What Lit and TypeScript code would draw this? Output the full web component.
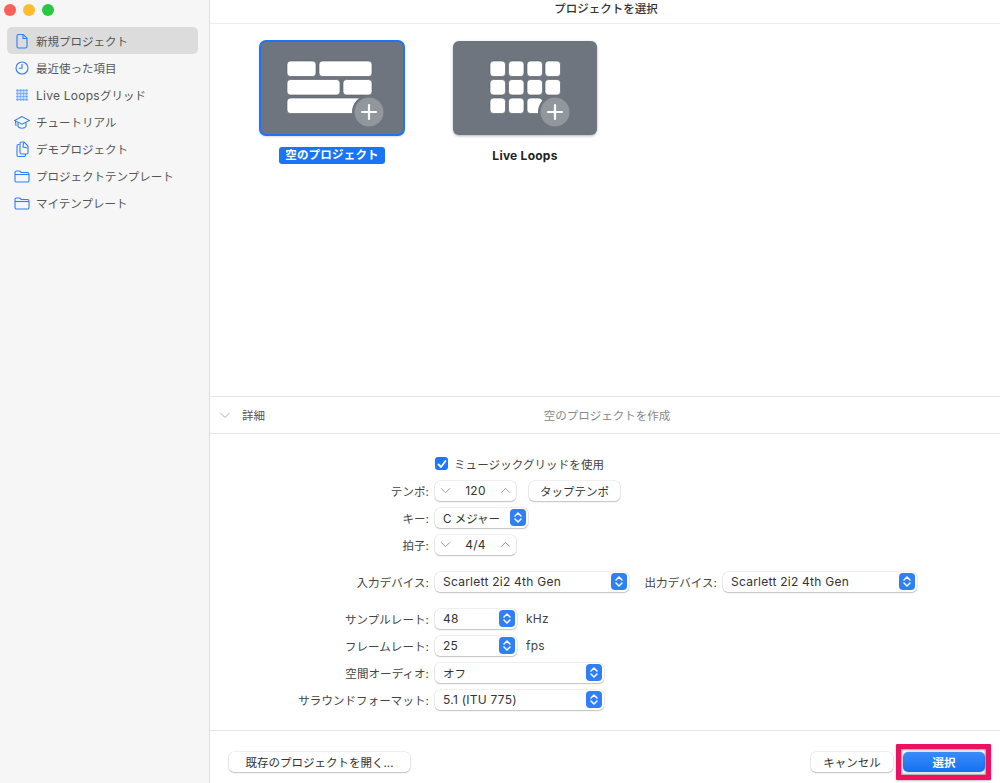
import { LitElement, html, css, svg, unsafeCSS } from "lit";
import { customElement } from "lit/decorators.js";

const blue = "#2f7ff6";
const icons: Record<string, unknown> = {
  doc: svg`<path d="M4.500 1.500h4.800L13 5.200V13.500A1.500 1.500 0 0 1 11.500 15h-7A1.500 1.500 0 0 1 3 13.500V3A1.500 1.500 0 0 1 4.500 1.500Z"/><path d="M9 1.700V5.500H12.800"/>`,
  clock: svg`<circle cx="8" cy="8" r="6"/><path d="M8 4v4.300H4.800"/>`,
  grid: svg`<g fill="#6ea6f8" stroke="none">${[3.5, 6.5, 9.5, 12.5].flatMap((y) =>
    [3.5, 6.5, 9.5, 12.5].map((x) => svg`<circle cx="${x}" cy="${y}" r="1.350"/>`)
  )}</g>`,
  cap: svg`<path d="M8 2.500.5 6.500 8 10.200l7.500-3.700Z"/><path d="M4 8.600v4c1.200 2.200 6.800 2.200 8 0v-4"/><path d="M1.500 7 2 12"/>`,
  demo: svg`<path d="M5.500 3.500h-1A1.500 1.500 0 0 0 3 5v9a1.500 1.500 0 0 0 1.500 1.500H10a1.500 1.500 0 0 0 1.500-1.500v-1"/><path d="M6 2.500A1.500 1.500 0 0 1 7.500 1H10l4 4v6.500a1.500 1.500 0 0 1-1.500 1.500h-5A1.500 1.500 0 0 1 6 11.500Z"/><path d="M9.500 1.500 9 6l4.500 1"/>`,
  folder: svg`<path d="M1 4.500A1.500 1.500 0 0 1 2.500 3h3.200l1.600 1.500h6.200A1.500 1.500 0 0 1 15 6v6.500a1.500 1.500 0 0 1-1.500 1.500h-11A1.500 1.500 0 0 1 1 12.500Z"/><path d="M1 6.500h14"/>`,
};

const sideItems = [
  ["doc", html`新規プロジェクト`, true],
  ["clock", html`最近使った項目`, false],
  ["grid", html`<span class="lat">Live Loops</span>グリッド`, false],
  ["cap", html`チュートリアル`, false],
  ["demo", html`デモプロジェクト`, false],
  ["folder", html`プロジェクトテンプレート`, false],
  ["folder", html`マイテンプレート`, false],
] as const;

const block = (x: number, y: number, w: number) =>
  svg`<rect x="${x}" y="${y}" width="${w}" height="15.500" rx="3.500" fill="#fff" stroke="#555b63" stroke-width=".6"/>`;

const plus = (cx: number, cy: number) => svg`
  <circle cx="${cx}" cy="${cy}" r="17" fill="#6e757e"/>
  <circle cx="${cx}" cy="${cy}" r="14.500" fill="#92979d"/>
  <path d="M${cx - 7} ${cy}h14M${cx} ${cy - 7}v14" stroke="#fff" stroke-width="2.200" stroke-linecap="round"/>`;

const emptyArt = html`<svg viewBox="0 0 145 95" width="145" height="95">
  ${block(27, 20, 29)}${block(59, 20, 53)}${block(27, 38.500, 53)}${block(83, 38.500, 29)}${block(27, 57, 85)}${plus(109, 71)}
</svg>`;
const loopsArt = html`<svg viewBox="0 0 145 95" width="145" height="95">
  ${[20, 38.500, 57].map((y) => [37, 55.500, 74, 92].map((x) => block(x, y, 15.500)))}${plus(102, 71)}
</svg>`;

const chevrons = html`<svg viewBox="0 0 16 17" width="16" height="17"><rect width="16" height="17" rx="4" fill="${blue}"/><path d="M5 7l3-3 3 3M5 10l3 3 3-3" fill="none" stroke="#fff" stroke-width="1.500" stroke-linecap="round" stroke-linejoin="round"/></svg>`;

const stepper = (v: string) => html`<div class="ctl stepper">
  <svg viewBox="0 0 12 8"><path d="M1 1.500l5 5 5-5" /></svg>
  <span class="lat">${v}</span>
  <svg viewBox="0 0 12 8"><path d="M1 6.500l5-5 5 5" /></svg>
</div>`;

const select = (v: string, w: number, lat = true) =>
  html`<div class="ctl select" style="width:${w}px"><span class="${lat ? "lat" : ""}">${v}</span>${chevrons}</div>`;

@customElement("app-root")
export class AppRoot extends LitElement {
  static styles = css`
    :host {
      display: flex;
      width: 1000px;
      height: 783px;
      overflow: hidden;
      background: #fff;
      font-family: Inter, "Noto Sans CJK JP", "Liberation Sans", sans-serif;
      font-size: 11.5px;
      color: #222;
    }
    .lat { font-size: 12px; letter-spacing: .25px; }
    .side {
      width: 210px;
      flex: none;
      box-sizing: border-box;
      background: #f6f6f6;
      border-right: 1px solid #dedede;
      padding: 4px 11px 0 7px;
    }
    .lights { display: flex; gap: 7px; margin: 0 0 11px -3px; height: 12px; }
    .lights i { width: 12px; height: 12px; border-radius: 50%; display: block; }
    .item {
      display: flex;
      align-items: center;
      height: 27px;
      border-radius: 5px;
      padding-left: 7px;
      gap: 6px;
      color: #555;
      white-space: nowrap;
    }
    .item.on { background: #dcdcdc; }
    .item svg { width: 16px; height: 16px; flex: none; fill: none; stroke: ${unsafeCSS(blue)}; stroke-width: 1.100; }
    .main { flex: 1; min-width: 0; display: flex; flex-direction: column; }
    .title {
      height: 24px;
      flex: none;
      box-sizing: border-box;
      border-bottom: 1px solid #ececec;
      text-align: center;
      line-height: 19px;
      font-weight: 500;
      color: #333;
      padding-left: 2px;
    }
    .gallery { height: 372px; flex: none; display: flex; gap: 49px; padding: 17px 0 0 50px; box-sizing: border-box; }
    .tile { width: 144px; display: flex; flex-direction: column; align-items: center; }
    .art { width: 144px; height: 94px; border-radius: 6px; background: #6e757e; box-shadow: 0 1px 3px rgba(0,0,0,.3); position: relative; }
    .art svg { display: block; width: 145px; height: 95px; }
    .tile.sel .art::after { content: ""; position: absolute; inset: -1px; border: 2px solid #1d75f5; border-radius: 7px; }
    .cap { margin-top: 12px; height: 17px; line-height: 17px; padding: 0 6px; border-radius: 3px; font-weight: 700; color: #222; white-space: nowrap; }
    .tile.sel .cap { background: #1a75f6; color: #fff; letter-spacing: .2px; }
    .details {
      height: 38px;
      flex: none;
      box-sizing: border-box;
      border-top: 1px solid #e6e6e6;
      border-bottom: 1px solid #e6e6e6;
      display: flex;
      align-items: center;
      padding-left: 10px;
      color: #555;
    }
    .details svg { width: 10px; height: 7px; fill: none; stroke: #aaa; stroke-width: 1; margin-right: 12px; }
    .details .center { flex: 1; text-align: center; color: #888; padding-right: 51px; }
    .form {
      flex: 1;
      display: grid;
      grid-template-columns: 219px 1fr;
      grid-template-rows: repeat(4, 27px) 10px 27px 10px repeat(4, 27px);
      column-gap: 5px;
      align-items: center;
      align-content: start;
      padding-top: 16px;
    }
    .form label { text-align: right; color: #444; white-space: nowrap; letter-spacing: .08px; }
    .cell { display: flex; align-items: center; min-width: 0; padding-left: 1px; }
    .gap { grid-column: 1 / 3; }
    .checkrow { gap: 6px; color: #444; letter-spacing: .1px; }
    .check { width: 13px; height: 13px; border-radius: 3px; background: #1f78f6; display: grid; place-items: center; }
    .check svg { width: 10px; height: 10px; fill: none; stroke: #fff; stroke-width: 1.800; stroke-linecap: round; stroke-linejoin: round; }
    .ctl {
      height: 20px;
      box-sizing: border-box;
      background: #fff;
      border-radius: 5px;
      box-shadow: 0 0 0 .5px rgba(0,0,0,.12), 0 1px 1.500px rgba(0,0,0,.2);
      display: flex;
      align-items: center;
      color: #333;
      white-space: nowrap;
      flex: none;
    }
    .stepper { width: 81px; padding: 0 5px; justify-content: space-between; }
    .stepper svg { fill: none; stroke: #888; stroke-width: 1; width: 11px; height: 7px; }
    .select { padding: 0 2px 0 8px; justify-content: space-between; }
    .select svg { display: block; }
    .btn { justify-content: center; }
    .tap { width: 91px; margin-left: 13px; }
    .unit { margin-left: 9px; color: #444; }
    .outlabel { margin-left: 12px; margin-right: 6px; color: #444; white-space: nowrap; width: 76px; text-align: right; letter-spacing: .08px; }
    .footer {
      height: 53px;
      flex: none;
      box-sizing: border-box;
      border-top: 1px solid #e6e6e6;
      display: flex;
      align-items: center;
      padding: 9px 15px 0 19px;
      position: relative;
    }
    .open { width: 181px; }
    .spacer { flex: 1; }
    .cancel { width: 82px; margin-right: 10px; }
    .ok {
      width: 82px;
      background: linear-gradient(#3b8cfa, #1570f2);
      color: #fff;
      font-weight: 700;
      box-shadow: 0 0 0 .5px rgba(0,0,0,.2);
    }
    .mark {
      position: absolute;
      right: 9px;
      top: 13px;
      width: 95px;
      height: 36px;
      box-sizing: border-box;
      border: 5px solid #ee1161;
      box-shadow: inset 0 0 2px 1px rgba(70,70,70,.55), 0 1px 2px rgba(0,0,0,.25);
      border-radius: 1px;
      pointer-events: none;
    }
  `;

  render() {
    return html`
      <aside class="side">
        <div class="lights">
          <i style="background:#ff5f57"></i><i style="background:#febc2e"></i><i style="background:#28c840"></i>
        </div>
        ${sideItems.map(
          ([ic, t, on]) => html`<div class="item ${on ? "on" : ""}"><svg viewBox="0 0 16 16">${icons[ic]}</svg><span>${t}</span></div>`
        )}
      </aside>
      <main class="main">
        <div class="title">プロジェクトを選択</div>
        <section class="gallery">
          <div class="tile sel"><div class="art">${emptyArt}</div><div class="cap">空のプロジェクト</div></div>
          <div class="tile"><div class="art">${loopsArt}</div><div class="cap lat">Live Loops</div></div>
        </section>
        <div class="details">
          <svg viewBox="0 0 10 7"><path d="M.5 1l4.500 4.500L9.500 1"/></svg>
          <span>詳細</span>
          <span class="center">空のプロジェクトを作成</span>
        </div>
        <section class="form">
          <span></span>
          <div class="cell checkrow">
            <div class="check"><svg viewBox="0 0 10 10"><path d="M1.500 5.500l2.500 2.500 4.500-6"/></svg></div>
            <span>ミュージックグリッドを使用</span>
          </div>
          <label>テンポ:</label>
          <div class="cell">${stepper("120")}<div class="ctl btn tap">タップテンポ</div></div>
          <label>キー:</label>
          <div class="cell">${select("C メジャー", 93, false)}</div>
          <label>拍子:</label>
          <div class="cell">${stepper("4/4")}</div>
          <div class="gap"></div>
          <label>入力デバイス:</label>
          <div class="cell">
            ${select("Scarlett 2i2 4th Gen", 194)}
            <span class="outlabel">出力デバイス:</span>
            ${select("Scarlett 2i2 4th Gen", 194)}
          </div>
          <div class="gap"></div>
          <label>サンプルレート:</label>
          <div class="cell">${select("48", 82)}<span class="unit lat">kHz</span></div>
          <label>フレームレート:</label>
          <div class="cell">${select("25", 82)}<span class="unit lat">fps</span></div>
          <label>空間オーディオ:</label>
          <div class="cell">${select("オフ", 169, false)}</div>
          <label>サラウンドフォーマット:</label>
          <div class="cell">${select("5.1 (ITU 775)", 169)}</div>
        </section>
        <footer class="footer">
          <div class="ctl btn open">既存のプロジェクトを開く...</div>
          <div class="spacer"></div>
          <div class="ctl btn cancel">キャンセル</div>
          <div class="ctl btn ok">選択</div>
          <div class="mark"></div>
        </footer>
      </main>
    `;
  }
}
